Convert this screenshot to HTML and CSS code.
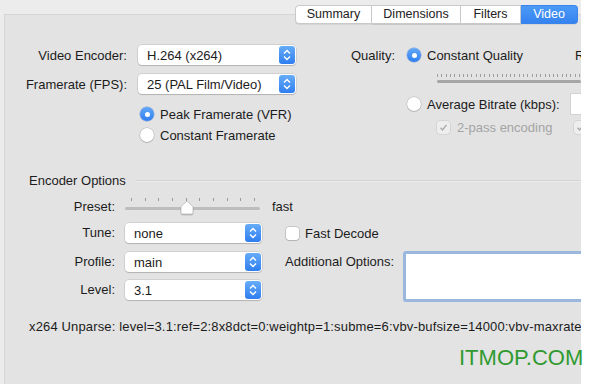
FILE: index.html
```html
<!DOCTYPE html>
<html>
<head>
<meta charset="utf-8">
<link rel="stylesheet" href="styles.css">
</head>
<body>
<div class="window">
  <div class="tabs">
    <div class="tab t-summary">Summary</div>
    <div class="tab t-dim">Dimensions</div>
    <div class="tab t-filters">Filters</div>
    <div class="tab t-video active">Video</div>
  </div>
  <div class="panel">
    <div class="top">
      <div class="left-col">
        <div class="form-grid">
          <div class="label">Video Encoder:</div>
          <div class="popup wide"><span class="popup-text">H.264 (x264)</span><span class="stepper"><svg width="16" height="18" viewBox="0 0 16 18"><polyline points="5,7.5 8,4.5 11,7.5" fill="none" stroke="#fff" stroke-width="1.4"/><polyline points="5,10.5 8,13.5 11,10.5" fill="none" stroke="#fff" stroke-width="1.4"/></svg></span></div>
          <div class="label">Framerate (FPS):</div>
          <div class="popup wide"><span class="popup-text">25 (PAL Film/Video)</span><span class="stepper"><svg width="16" height="18" viewBox="0 0 16 18"><polyline points="5,7.5 8,4.5 11,7.5" fill="none" stroke="#fff" stroke-width="1.4"/><polyline points="5,10.5 8,13.5 11,10.5" fill="none" stroke="#fff" stroke-width="1.4"/></svg></span></div>
        </div>
        <div class="radios">
          <div class="radio-row"><span class="radio on"></span><span>Peak Framerate (VFR)</span></div>
          <div class="radio-row"><span class="radio"></span><span>Constant Framerate</span></div>
        </div>
      </div>
      <div class="right-col">
        <div class="q-row">
          <span class="q-label">Quality:</span>
          <span class="radio on"></span>
          <span class="q-text">Constant Quality</span>
          <span class="rf">RF:</span>
        </div>
        <div class="q-slider">
          <div class="ticks"></div>
          <div class="track"></div>
        </div>
        <div class="ab-row">
          <span class="radio"></span>
          <span class="q-text">Average Bitrate (kbps):</span>
          <span class="mini-field"></span>
        </div>
        <div class="pass-row">
          <span class="check checked disabled"><svg width="11" height="11" viewBox="0 0 11 11"><polyline points="2.5,5.8 4.6,8 8.5,2.8" fill="none" stroke="#a9a9a9" stroke-width="1.3"/></svg></span>
          <span class="disabled-text">2-pass encoding</span>
          <span class="check checked disabled far"><svg width="11" height="11" viewBox="0 0 11 11"><polyline points="2.5,5.8 4.6,8 8.5,2.8" fill="none" stroke="#a9a9a9" stroke-width="1.3"/></svg></span>
        </div>
      </div>
    </div>

    <div class="section-head">
      <span>Encoder Options</span>
      <span class="rule"></span>
    </div>

    <div class="enc-grid">
      <div class="label r-preset">Preset:</div>
      <div class="preset-slider r-preset">
        <div class="p-ticks">
          <i></i><i></i><i></i><i></i><i></i><i></i><i></i><i></i><i></i><i></i>
        </div>
        <div class="p-track"></div>
        <svg class="thumb" width="14" height="15" viewBox="0 0 14 15"><path d="M7 1 L12.5 6 Q13 6.5 13 7.5 L13 12.5 Q13 14 11.5 14 L2.5 14 Q1 14 1 12.5 L1 7.5 Q1 6.5 1.5 6 Z" fill="#fff" stroke="#b9b9b9" stroke-width="0.8"/></svg>
      </div>
      <div class="r-preset fast">fast</div>

      <div class="label r-tune">Tune:</div>
      <div class="popup r-tune"><span class="popup-text">none</span><span class="stepper"><svg width="16" height="18" viewBox="0 0 16 18"><polyline points="5,7.5 8,4.5 11,7.5" fill="none" stroke="#fff" stroke-width="1.4"/><polyline points="5,10.5 8,13.5 11,10.5" fill="none" stroke="#fff" stroke-width="1.4"/></svg></span></div>
      <div class="r-tune fast-decode"><span class="check"></span><span>Fast Decode</span></div>

      <div class="label r-profile">Profile:</div>
      <div class="popup r-profile"><span class="popup-text">main</span><span class="stepper"><svg width="16" height="18" viewBox="0 0 16 18"><polyline points="5,7.5 8,4.5 11,7.5" fill="none" stroke="#fff" stroke-width="1.4"/><polyline points="5,10.5 8,13.5 11,10.5" fill="none" stroke="#fff" stroke-width="1.4"/></svg></span></div>
      <div class="addl">
        <span class="addl-label">Additional Options:</span>
        <span class="textarea"></span>
      </div>

      <div class="label r-level">Level:</div>
      <div class="popup r-level"><span class="popup-text">3.1</span><span class="stepper"><svg width="16" height="18" viewBox="0 0 16 18"><polyline points="5,7.5 8,4.5 11,7.5" fill="none" stroke="#fff" stroke-width="1.4"/><polyline points="5,10.5 8,13.5 11,10.5" fill="none" stroke="#fff" stroke-width="1.4"/></svg></span></div>
    </div>

    <div class="unparse">x264 Unparse: level=3.1:ref=2:8x8dct=0:weightp=1:subme=6:vbv-bufsize=14000:vbv-maxrate=14000</div>
  </div>
</div>
<div class="watermark">ITMOP.COM</div>
</body>
</html>
```
FILE: styles.css
```css
* { box-sizing: border-box; }

body {
  margin: 0;
  background: #ffffff;
  font-family: "Liberation Sans", Arial, sans-serif;
  font-size: 13px;
  color: #1c1c1c;
  width: 590px;
  height: 384px;
  overflow: hidden;
  position: relative;
}

.window {
  width: 581px;
  height: 384px;
  background: #ececec;
  overflow: hidden;
}

/* Tabs */
.tabs {
  display: flex;
  justify-content: flex-end;
  padding: 5px 3px 0 0;
  height: 24px;
  position: relative;
  z-index: 1;
}
.tab {
  height: 19px;
  line-height: 17px;
  text-align: center;
  background: #ffffff;
  border: 1px solid #c9c9c9;
  border-left: none;
  font-size: 12.5px;
  color: #222;
  box-shadow: 0 0.5px 0.5px rgba(0,0,0,0.12);
}
.t-summary { width: 77px; border-left: 1px solid #c9c9c9; border-radius: 4px 0 0 4px; }
.t-dim { width: 89px; }
.t-filters { width: 60px; }
.t-video { width: 57px; border-radius: 0 4px 4px 0; }
.tab.active {
  background: linear-gradient(#4c9af6, #3483f0);
  border-color: #3a84ea;
  color: #ffffff;
}

/* Panel */
.panel {
  margin: -10px 0 0 4px;
  height: 370px;
  background: #e3e3e3;
  border: 1px solid #d6d6d6;
  border-right: none;
  border-bottom: none;
}

.top {
  display: flex;
  gap: 55px;
  padding-top: 30px;
  height: 157px;
}

.left-col { width: 291px; flex: none; }

.form-grid {
  display: grid;
  grid-template-columns: 122px 158px;
  column-gap: 11px;
  row-gap: 9px;
  grid-auto-rows: 20px;
  align-items: center;
}
.label {
  text-align: right;
  white-space: nowrap;
}

.popup {
  height: 20px;
  display: flex;
  align-items: center;
  background: #ffffff;
  border-radius: 4px;
  box-shadow: 0 0 0 0.5px rgba(0,0,0,0.16), 0 1px 1px rgba(0,0,0,0.14);
  padding: 1px;
}
.popup-text {
  flex: 1;
  padding-left: 8px;
  white-space: nowrap;
}
.stepper {
  width: 16px;
  height: 18px;
  border-radius: 3px;
  background: linear-gradient(#66acf8, #2f7ef0);
  display: flex;
  flex: none;
}

.radios {
  margin-top: 10px;
  padding-left: 135px;
  display: flex;
  flex-direction: column;
  gap: 1px;
}
.radio-row {
  height: 20px;
  display: flex;
  align-items: center;
  gap: 6px;
}
.radio {
  width: 14px;
  height: 14px;
  border-radius: 50%;
  background: #ffffff;
  box-shadow: 0 0 0 0.5px rgba(0,0,0,0.22), 0 1px 1px rgba(0,0,0,0.12);
  flex: none;
  position: relative;
}
.radio.on {
  background: linear-gradient(#62a8f7, #2f7ef0);
  box-shadow: 0 0 0 0.5px rgba(30,90,200,0.5);
}
.radio.on::after {
  content: "";
  position: absolute;
  left: 4.5px;
  top: 4.5px;
  width: 5px;
  height: 5px;
  border-radius: 50%;
  background: #ffffff;
}

/* Right column */
.right-col {
  flex: 1;
  min-width: 0;
  white-space: nowrap;
}
.right-col span { flex: none; }
.q-row {
  height: 20px;
  display: flex;
  align-items: center;
}
.q-label { width: 56px; }
.q-text { margin-left: 6px; }
.rf { margin-left: 52px; }

.q-slider {
  margin-left: 86px;
  margin-top: 9px;
  height: 12px;
  position: relative;
}
.ticks {
  height: 3px;
  background: repeating-linear-gradient(90deg, #8d8d8d 0 1px, transparent 1px 4.3px);
  opacity: 0.8;
}
.track {
  margin-top: 3px;
  height: 3px;
  background: #a6a6a6;
  border-radius: 1.5px;
}

.ab-row {
  margin-top: 8px;
  margin-left: 56px;
  height: 20px;
  display: flex;
  align-items: center;
}
.mini-field {
  margin-left: 11px;
  width: 30px;
  height: 20px;
  background: #fff;
  box-shadow: 0 0 0 0.5px rgba(0,0,0,0.15);
}
.pass-row {
  margin-left: 86px;
  margin-top: 3px;
  height: 20px;
  display: flex;
  align-items: center;
}
.check {
  width: 13px;
  height: 13px;
  border-radius: 3px;
  background: #ffffff;
  box-shadow: 0 0 0 0.5px rgba(0,0,0,0.25), 0 1px 1px rgba(0,0,0,0.1);
  flex: none;
  display: flex;
  align-items: center;
  justify-content: center;
}
.check.disabled {
  background: #eeeeee;
  box-shadow: 0 0 0 0.5px rgba(0,0,0,0.12);
}
.disabled-text { color: #a4a4a4; margin-left: 7px; }
.check.far { margin-left: 22px; }

/* Section header */
.section-head {
  height: 16px;
  display: flex;
  align-items: center;
  padding-left: 24px;
}
.rule {
  flex: 1;
  height: 1px;
  margin-left: 10px;
  background: #d2d2d2;
  box-shadow: 0 1px 0 #ececec;
}

/* Encoder grid */
.enc-grid {
  margin-top: 9px;
  display: grid;
  grid-template-columns: 110px 137px 1fr;
  grid-template-rows: 26px 29px 28px 20px;
  column-gap: 10px;
  align-items: start;
}
.enc-grid .label { height: 20px; line-height: 20px; }
.r-preset { grid-row: 1; }
.r-tune { grid-row: 2; }
.r-profile { grid-row: 3; }
.r-level { grid-row: 4; }

.preset-slider {
  height: 20px;
  position: relative;
  width: 135px;
}
.p-ticks {
  display: flex;
  justify-content: space-between;
  padding: 0 5px 0 6px;
  height: 3px;
  margin-top: 1px;
}
.p-ticks i {
  width: 1px;
  height: 3px;
  background: #9a9a9a;
}
.p-track {
  margin-top: 6px;
  height: 3px;
  border-radius: 1.5px;
  background: #bdbdbd;
}
.thumb {
  position: absolute;
  left: 55px;
  top: 3px;
  filter: drop-shadow(0 1px 0.5px rgba(0,0,0,0.2));
}
.fast { height: 20px; line-height: 20px; }

.fast-decode {
  height: 20px;
  display: flex;
  align-items: center;
  padding-left: 14px;
  gap: 6px;
}

.addl {
  grid-row: 3 / span 2;
  grid-column: 3;
  display: flex;
  align-items: flex-start;
  padding-left: 13px;
  margin-top: -1px;
}
.addl-label { line-height: 22px; white-space: nowrap; }
.textarea {
  margin-left: 9px;
  width: 190px;
  height: 51px;
  background: #ffffff;
  border: 3px solid #9ab7de;
  border-radius: 3px;
  flex: none;
}

.unparse {
  margin-top: 17px;
  padding-left: 24px;
  white-space: nowrap;
  height: 20px;
  line-height: 20px;
  letter-spacing: 0.15px;
}

.watermark {
  position: absolute;
  left: 459px;
  top: 345px;
  font-family: "Liberation Sans", Arial, sans-serif;
  font-size: 22px;
  color: #2f9a30;
  line-height: 26px;
  white-space: nowrap;
}
```
